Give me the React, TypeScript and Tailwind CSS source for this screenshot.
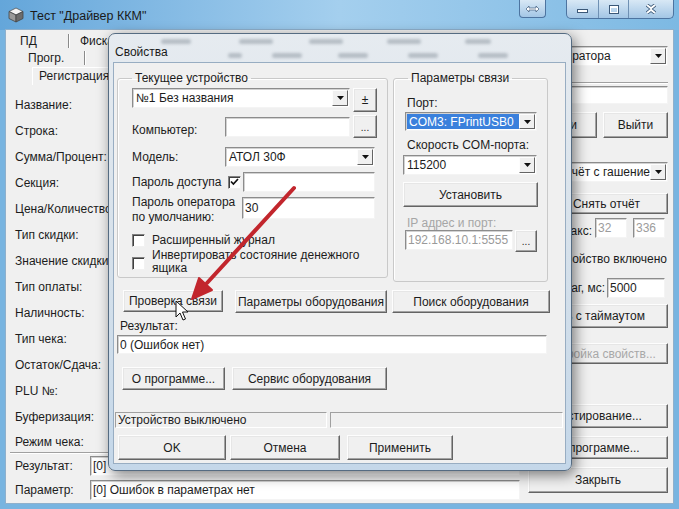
import React from 'react';

type P = { children?: React.ReactNode; className?: string };

const Btn: React.FC<P & { disabled?: boolean }> = ({ children, className = '', disabled }) => (
  <div
    className={`flex items-center justify-center whitespace-nowrap bg-[#f0f0f0] border border-t-[#fdfdfd] border-l-[#fdfdfd] border-r-[#646464] border-b-[#646464] shadow-[inset_-1px_-1px_0_#a3a3a3,inset_1px_1px_0_#e6e6e6] ${disabled ? 'text-[#a8a8a8]' : ''} ${className}`}
  >
    {children}
  </div>
);

const Field: React.FC<P> = ({ children, className = '' }) => (
  <div
    className={`flex items-center overflow-hidden whitespace-nowrap bg-white pl-[2px] border border-t-[#8c8c8c] border-l-[#8c8c8c] border-r-[#f4f4f4] border-b-[#f4f4f4] shadow-[inset_1px_1px_0_#d2d2d2] ${className}`}
  >
    {children}
  </div>
);

const DownArrow = () => (
  <svg width="7" height="4" viewBox="0 0 7 4">
    <path d="M0 0h7L3.5 4z" fill="#111" />
  </svg>
);

const Combo: React.FC<{ text: string; className?: string; selected?: boolean; textClass?: string }> = ({
  text,
  className = '',
  selected,
  textClass = '',
}) => (
  <div
    className={`flex items-stretch overflow-hidden whitespace-nowrap bg-white border border-t-[#8c8c8c] border-l-[#8c8c8c] border-r-[#f4f4f4] border-b-[#f4f4f4] shadow-[inset_1px_1px_0_#d2d2d2] p-[1px] ${className}`}
  >
    <div className="flex-1 min-w-0 flex items-center overflow-hidden">
      <span
        className={`pl-[2px] ${selected ? 'bg-[#3a80dc] text-white h-full flex items-center w-full' : ''} ${textClass}`}
      >
        {text}
      </span>
    </div>
    <div className="w-[16px] shrink-0 flex items-center justify-center bg-[#f0f0f0] border border-t-[#fdfdfd] border-l-[#fdfdfd] border-r-[#646464] border-b-[#646464]">
      <DownArrow />
    </div>
  </div>
);

const Check: React.FC<{ checked?: boolean; className?: string }> = ({ checked, className = '' }) => (
  <div
    className={`w-[13px] h-[13px] shrink-0 flex items-center justify-center bg-white border border-t-[#808080] border-l-[#808080] border-r-[#f2f2f2] border-b-[#f2f2f2] shadow-[inset_1px_1px_0_#404040] ${className}`}
  >
    {checked && (
      <svg width="9" height="8" viewBox="0 0 9 8">
        <path d="M1 3.5 3.4 6 8 1" fill="none" stroke="#111" strokeWidth="1.7" />
      </svg>
    )}
  </div>
);

const Group: React.FC<P & { title: string }> = ({ title, className = '', children }) => (
  <fieldset className={`border border-[#c9c9c9] rounded-[3px] shadow-[inset_1px_1px_0_#fff] ${className}`}>
    <legend className="ml-[14px] px-[3px] leading-[14px]">{title}</legend>
    {children}
  </fieldset>
);

const Sep = () => <div className="w-[2px] h-[14px] shrink-0 border-l border-[#8a8a8a] border-r border-r-white" />;

const labels = [
  'Название:',
  'Строка:',
  'Сумма/Процент:',
  'Секция:',
  'Цена/Количество:',
  'Тип скидки:',
  'Значение скидки:',
  'Тип оплаты:',
  'Наличность:',
  'Тип чека:',
  'Остаток/Сдача:',
  'PLU №:',
  'Буферизация:',
];

const Blur: React.FC<{ w: number; className?: string }> = ({ w, className = '' }) => (
  <div className={`h-[5px] bg-[#6f7b86] opacity-40 blur-[1.5px] rounded-full ${className}`} style={{ width: w }} />
);

export default function App() {
  return (
    <div className="w-[679px] h-[509px] relative overflow-hidden flex flex-col text-[12px] leading-[14px] text-[#1c1c1c] font-['Liberation_Sans',Arial,sans-serif] bg-[#78b4e0]">
      {/* title bar */}
      <div className="h-[30px] shrink-0 flex items-start bg-gradient-to-r from-[#64a6da] via-[#a4cfee] to-[#7db9e3]">
        <svg className="ml-[8px] mt-[7px]" width="16" height="16" viewBox="0 0 16 16">
          <path d="M8 1 15 4.5 8 8 1 4.5z" fill="#f4f4f4" stroke="#555" strokeWidth="0.8" />
          <path d="M1 4.5 8 8v7L1 11.5z" fill="#9a9a9a" stroke="#444" strokeWidth="0.8" />
          <path d="M15 4.5 8 8v7l7-3.5z" fill="#6c6c6c" stroke="#444" strokeWidth="0.8" />
        </svg>
        <span className="ml-[6px] mt-[9px] text-[12.5px] text-[#1a1a1a]">Тест "Драйвер ККМ"</span>
        <div className="ml-auto mr-[5px] flex items-start">
          <div className="w-[27px] h-[18px] rounded-b-[4px] border border-t-0 border-[#4d74a0] bg-gradient-to-b from-[#d8e8f5] to-[#a3c6e5] flex items-center justify-center">
            <svg width="15" height="8" viewBox="0 0 15 8">
              <path d="M1 4 4 1v2h7V1l3 3-3 3V5H4v2z" fill="#fff" stroke="#3b5878" strokeWidth="0.7" />
            </svg>
          </div>
          <div className="ml-[20px] flex h-[19px] rounded-b-[5px] border border-t-0 border-[#4d74a0] overflow-hidden bg-gradient-to-b from-[#d8e8f5] to-[#a3c6e5]">
            <div className="w-[32px] flex items-end justify-center pb-[5px] border-r border-[#6f90b3]">
              <div className="w-[11px] h-[4px] bg-white border border-[#3b5878]" />
            </div>
            <div className="w-[30px] flex items-center justify-center border-r border-[#6f90b3]">
              <div className="w-[10px] h-[9px] border border-[#3b5878] shadow-[inset_0_2px_0_#fff,inset_0_0_0_1px_#fff]" />
            </div>
            <div className="w-[44px] flex items-center justify-center">
              <svg width="12" height="10" viewBox="0 0 12 10">
                <path d="M2 1 6 4.2 10 1M2 9 6 5.8 10 9" fill="none" stroke="#3b5878" strokeWidth="3.6" />
                <path d="M2 1 6 4.2 10 1M2 9 6 5.8 10 9" fill="none" stroke="#fff" strokeWidth="2" />
              </svg>
            </div>
          </div>
        </div>
      </div>

      {/* window body */}
      <div className="flex-1 flex px-[6px] pb-[6px]">
        <div className="flex-1 flex bg-[#f0f0f0] shadow-[0_0_0_1px_#8fb0cc]">
          {/* left part */}
          <div className="w-[516px] flex flex-col">
            <div className="w-[102px] overflow-hidden">
              <div className="mt-[2px] h-[18px] flex items-center whitespace-nowrap">
                <span className="w-[62px] shrink-0 pl-[14px]">ПД</span>
                <Sep />
                <span className="pl-[10px]">Фискализация</span>
              </div>
              <div className="h-[16px] flex items-center whitespace-nowrap">
                <span className="w-[78px] shrink-0 pl-[22px]">Прогр.</span>
                <Sep />
              </div>
              <div className="h-[19px] flex items-end whitespace-nowrap">
                <div className="ml-[26px] px-[6px] h-[18px] pt-[1px] border-t border-l border-white">Регистрация</div>
              </div>
            </div>
            <div className="mt-[7px] flex flex-col pl-[9px]">
              {labels.map((l) => (
                <div key={l} className="h-[26px] flex items-center whitespace-nowrap">
                  {l}
                </div>
              ))}
              <div className="h-[22px] pt-[5px]">Режим чека:</div>
            </div>
            <div className="ml-[4px] w-[512px] h-[2px] border-t border-[#a0a0a0] border-b border-b-white" />
            <div className="mt-[2px] h-[20px] flex items-center">
              <span className="w-[84px] pl-[9px]">Результат:</span>
              <Field className="w-[430px] h-[20px]">[0] Ошибок нет</Field>
            </div>
            <div className="mt-[4px] h-[20px] flex items-center">
              <span className="w-[84px] pl-[9px]">Параметр:</span>
              <Field className="w-[430px] h-[20px]">[0] Ошибок в параметрах нет</Field>
            </div>
          </div>

          {/* right column */}
          <div className="w-[140px] ml-[6px] flex flex-col">
            <Combo text="Режим оператора" className="mt-[16px] h-[20px] -ml-[40px] w-[180px]" textClass="pl-[22px]" />
            <div className="mt-[16px] h-[2px] border-t border-[#a0a0a0] border-b border-b-white" />
            <Field className="mt-[2px] h-[18px]" />
            <div className="mt-[8px] flex">
              <Btn className="-ml-[30px] w-[99px] h-[26px]">Настройки</Btn>
              <Btn className="ml-[6px] w-[65px] h-[26px]">Выйти</Btn>
            </div>
            <Combo text="Отчёт с гашением" className="mt-[24px] ml-[25px] w-[115px] h-[20px]" />
            <Btn className="mt-[11px] ml-[17px] w-[123px] h-[21px]">Снять отчёт</Btn>
            <div className="mt-[4px] h-[20px] flex items-end">
              <span className="w-[67px] text-right pr-[3px]">Макс:</span>
              <Field className="w-[32px] h-[20px] text-[#9c9c9c]">32</Field>
              <Field className="ml-[6px] w-[32px] h-[20px] text-[#9c9c9c]">336</Field>
            </div>
            <div className="mt-[14px] w-[139px] text-right whitespace-nowrap">Устройство включено</div>
            <div className="mt-[12px] h-[20px] flex items-center">
              <span className="w-[79px] text-right pr-[2px]">Шаг, мс:</span>
              <Field className="w-[58px] h-[20px]">5000</Field>
            </div>
            <Btn className="mt-[6px] -ml-[18px] w-[158px] h-[24px]">Печать с таймаутом</Btn>
            <Btn disabled className="mt-[15px] h-[21px]">Настройка свойств...</Btn>
            <Btn className="mt-[40px] h-[24px]">Тестирование...</Btn>
            <Btn className="mt-[8px] h-[23px]">О программе...</Btn>
            <Btn className="mt-[8px] h-[26px]">Закрыть</Btn>
          </div>
        </div>
      </div>

      {/* dialog "Свойства" */}
      <div className="absolute left-[108px] top-[33px] w-[464px] h-[438px] rounded-[7px] border border-[#566c82] bg-[linear-gradient(180deg,#e6ebf0_0%,#d8e2eb_45%,#c4d7e9_100%)] shadow-[3px_4px_14px_rgba(0,0,0,0.5)] flex flex-col">
        <div className="h-[29px] flex flex-col">
          <div className="mt-[4px] h-[6px] flex items-center">
            <Blur w={30} className="ml-[52px]" />
            <Blur w={34} className="ml-[48px]" />
            <Blur w={34} className="ml-[36px]" />
            <Blur w={34} className="ml-[44px]" />
            <Blur w={26} className="ml-[44px]" />
          </div>
          <div className="mt-[1px] flex items-end">
            <span className="ml-[6px] text-[#1a1a1a]">Свойства</span>
            <Blur w={14} className="ml-[60px] mb-[1px]" />
            <Blur w={30} className="ml-[30px] mb-[1px]" />
            <Blur w={30} className="ml-[36px] mb-[1px]" />
            <Blur w={30} className="ml-[40px] mb-[1px]" />
            <Blur w={30} className="ml-[40px] mb-[1px]" />
          </div>
        </div>
        <div className="ml-[5px] w-[451px] h-[400px] bg-[#f0f0f0] shadow-[0_0_0_1px_#98adc2] flex flex-col">
          <div className="flex items-start pl-[3px] pt-[8px] gap-[5px]">
            <Group title="Текущее устройство" className="w-[271px] h-[207px]">
              <div className="flex items-start mt-[3px] ml-[14px]">
                <Combo text="№1 Без названия" className="w-[218px] h-[20px]" />
                <Btn className="ml-[3px] w-[24px] h-[24px]">±</Btn>
              </div>
              <div className="flex items-start mt-[3px] ml-[14px]">
                <span className="w-[93px] mt-[8px]">Компьютер:</span>
                <Field className="w-[125px] h-[20px] mt-[2px]" />
                <Btn className="ml-[3px] w-[24px] h-[23px] text-[10px] items-end pb-[2px]">...</Btn>
              </div>
              <div className="flex items-center mt-[9px] ml-[14px]">
                <span className="w-[93px]">Модель:</span>
                <Combo text="АТОЛ 30Ф" className="w-[150px] h-[20px]" />
              </div>
              <div className="flex items-center mt-[5px] ml-[14px]">
                <span className="w-[96px] whitespace-nowrap">Пароль доступа</span>
                <Check checked />
                <Field className="ml-[2px] w-[132px] h-[20px]" />
              </div>
              <div className="flex items-start mt-[3px] ml-[14px]">
                <span className="w-[110px] leading-[15px]">
                  Пароль оператора
                  <br />
                  по умолчанию:
                </span>
                <Field className="mt-[2px] w-[133px] h-[22px]">30</Field>
              </div>
              <div className="flex items-center mt-[8px] ml-[14px]">
                <Check />
                <span className="ml-[7px]">Расширенный журнал</span>
              </div>
              <div className="flex items-start mt-[2px] ml-[14px]">
                <Check className="mt-[8px]" />
                <span className="ml-[7px] leading-[13px]">
                  Инвертировать состояние денежного
                  <br />
                  ящика
                </span>
              </div>
            </Group>
            <Group title="Параметры связи" className="w-[155px] h-[211px]">
              <div className="ml-[13px] mt-[11px]">Порт:</div>
              <Combo selected text="COM3: FPrintUSB0" className="ml-[11px] mt-[2px] w-[132px] h-[19px]" />
              <div className="ml-[13px] mt-[7px] whitespace-nowrap">Скорость COM-порта:</div>
              <Combo text="115200" className="ml-[9px] mt-[3px] w-[134px] h-[20px]" />
              <Btn className="ml-[9px] mt-[7px] w-[135px] h-[25px]">Установить</Btn>
              <div className="ml-[13px] mt-[9px] text-[#a6a6a6]">IP адрес и порт:</div>
              <div className="flex items-start ml-[11px]">
                <Field className="w-[108px] h-[20px] text-[#9a9a9a]">192.168.10.1:5555</Field>
                <Btn className="ml-[2px] w-[22px] h-[22px] text-[10px] items-end pb-[2px]">...</Btn>
              </div>
            </Group>
          </div>
          <div className="flex items-start mt-[8px]">
            <Btn className="ml-[9px] w-[100px] h-[22px]">Проверка связи</Btn>
            <Btn className="ml-[12px] w-[152px] h-[23px]">Параметры оборудования</Btn>
            <Btn className="ml-[5px] w-[158px] h-[23px]">Поиск оборудования</Btn>
          </div>
          <div className="mt-[6px] ml-[6px]">Результат:</div>
          <Field className="mt-[2px] ml-[3px] w-[430px] h-[19px]">0 (Ошибок нет)</Field>
          <div className="flex items-start mt-[13px]">
            <Btn className="ml-[8px] w-[103px] h-[23px]">О программе...</Btn>
            <Btn className="ml-[7px] w-[155px] h-[23px]">Сервис оборудования</Btn>
          </div>
          <div className="mt-[22px] h-[16px] flex">
            <div className="ml-[1px] w-[212px] h-[16px] pl-[2px] leading-[14px] whitespace-nowrap border border-t-[#a0a0a0] border-l-[#a0a0a0] border-r-white border-b-white">
              Устройство выключено
            </div>
            <div className="ml-[3px] w-[233px] h-[16px] border border-t-[#a0a0a0] border-l-[#a0a0a0] border-r-white border-b-white" />
          </div>
          <div className="flex items-start mt-[7px]">
            <Btn className="ml-[4px] w-[108px] h-[25px]">OK</Btn>
            <Btn className="ml-[4px] w-[110px] h-[25px]">Отмена</Btn>
            <Btn className="ml-[7px] w-[106px] h-[25px]">Применить</Btn>
          </div>
        </div>
      </div>

      {/* red arrow + mouse pointer */}
      <svg className="absolute left-0 top-0 pointer-events-none" width="679" height="509" viewBox="0 0 679 509">
        <line x1="294" y1="188" x2="207" y2="283" stroke="#c2262d" strokeWidth="4" strokeLinecap="round" />
        <path d="M192 299 212 290 199 278z" fill="#c2262d" stroke="#c2262d" strokeWidth="2" strokeLinejoin="round" />
        <path d="M176 301v16l4-4 3 7 2.5-1-3-7h5.5z" fill="#fff" stroke="#111" strokeWidth="1" />
      </svg>
    </div>
  );
}
